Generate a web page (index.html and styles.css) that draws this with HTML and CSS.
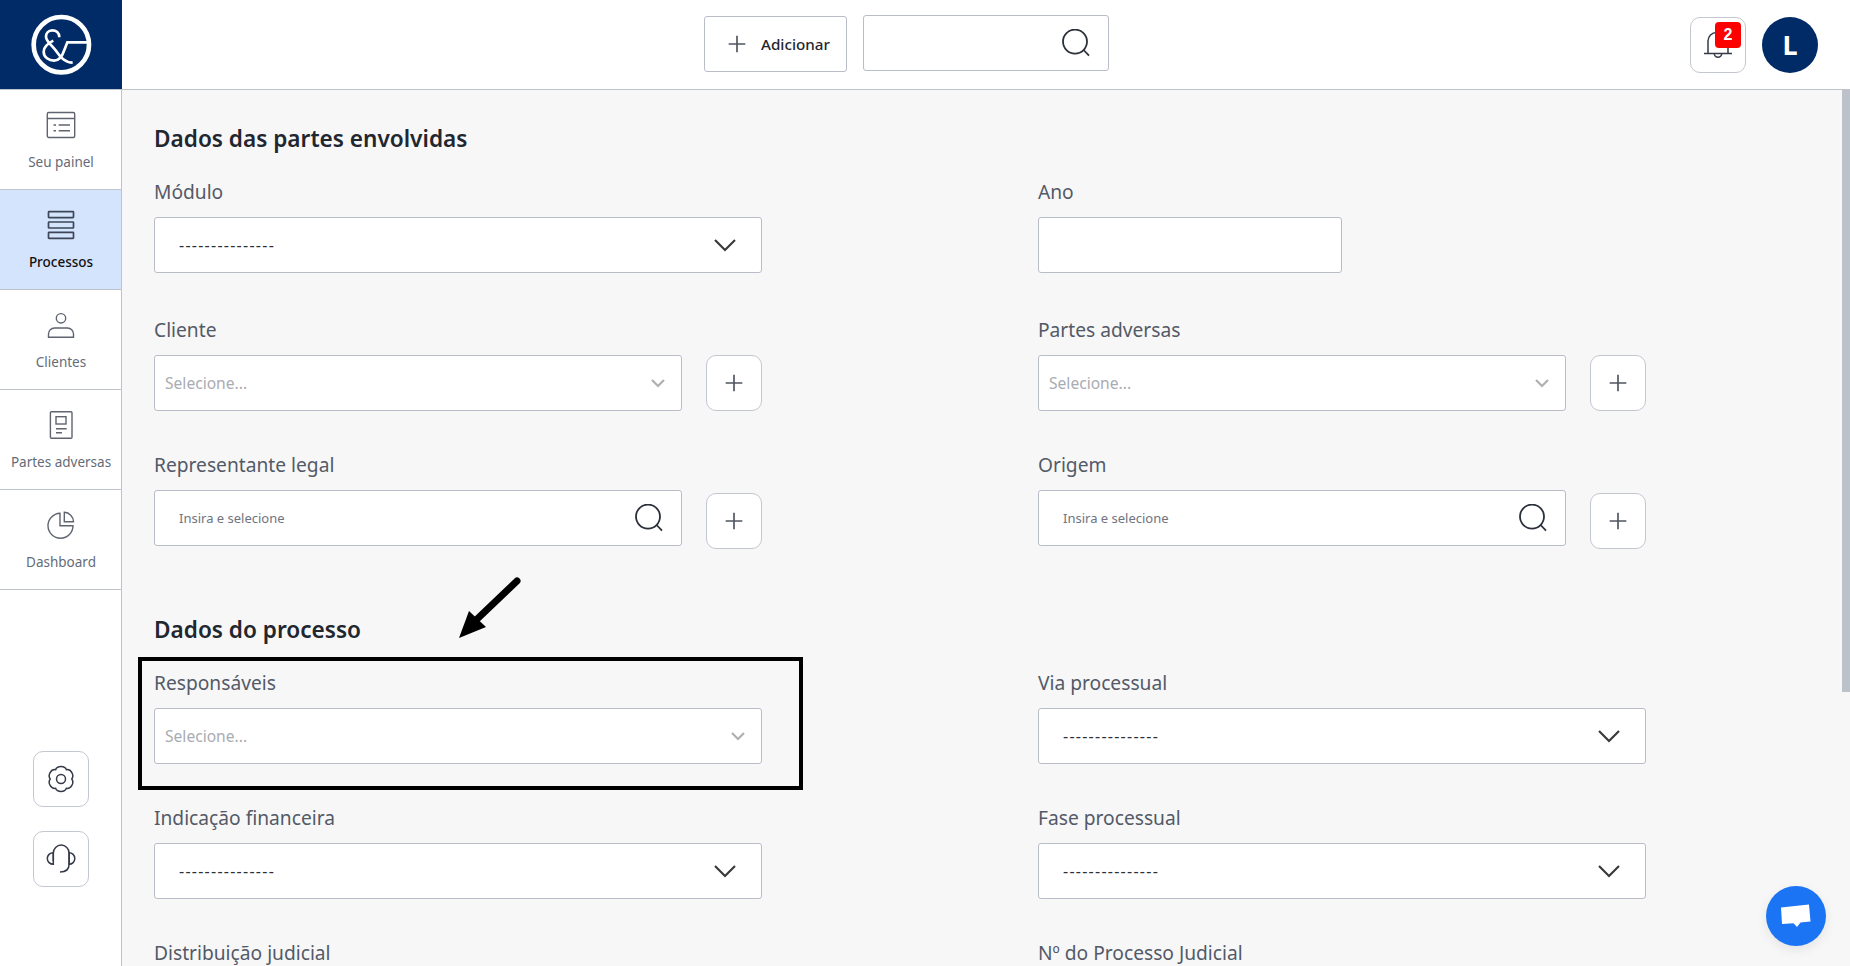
FILE: index.html
```html
<!DOCTYPE html>
<html lang="pt-BR">
<head>
<meta charset="utf-8">
<title>Processos</title>
<link rel="stylesheet" href="styles.css">
</head>
<body>
<svg class="defs" width="0" height="0" aria-hidden="true">
  <defs>
    <symbol id="i-plus" viewBox="0 0 24 24"><path d="M12 2v20M2 12h20"/></symbol>
    <symbol id="i-search" viewBox="0 0 28 28"><circle cx="13" cy="12.6" r="12"/><path d="M21.6 21l5.4 5.6"/></symbol>
    <symbol id="i-chev-big" viewBox="0 0 24 14"><path d="M2 2l10 10L22 2"/></symbol>
    <symbol id="i-chev" viewBox="0 0 14 10"><path d="M1 2l6 6 6-6"/></symbol>
  </defs>
</svg>
<div class="app">
  <aside class="side">
    <div class="logo">
      <svg width="123" height="89" viewBox="0 0 369 267" fill="none" stroke="#fff">
        <circle cx="184" cy="134" r="83" stroke-width="14"/>
        <path stroke-width="8" d="M178 112C178 98 168 91 157 91C144 91 138 101 138 110C138 124 155 135 170 155C182 172 195 188 218 188"/>
        <path stroke-width="8" d="M160 122C140 132 131 142 131 155C131 172 147 182 162 182C180 182 188 165 193 150L202 127H262"/>
      </svg>
    </div>
    <nav class="nav">
      <a class="nav-item">
        <svg class="nav-ic" viewBox="0 0 32 32"><rect x="2.3" y="3.5" width="27.4" height="25" rx="1.5"/><path d="M2.3 9.5h27.4M8.500 16H11M13.700 16H25M8.500 21.700H11M13.700 21.700H25"/></svg>
        <span>Seu painel</span>
      </a>
      <a class="nav-item active">
        <svg class="nav-ic" viewBox="0 0 32 32"><rect x="3.5" y="2.7" width="25" height="6" rx=".6"/><rect x="3.5" y="13" width="25" height="6" rx=".6"/><rect x="3.5" y="23.3" width="25" height="6" rx=".6"/></svg>
        <span>Processos</span>
      </a>
      <a class="nav-item">
        <svg class="nav-ic" viewBox="0 0 32 32"><circle cx="16" cy="9.300" r="4.700"/><path d="M3.500 28.300V25a6 6 0 0 1 6-6h13a6 6 0 0 1 6 6v3.300z"/></svg>
        <span>Clientes</span>
      </a>
      <a class="nav-item">
        <svg class="nav-ic" viewBox="0 0 32 32"><rect x="5.400" y="2.700" width="21.600" height="26.600" rx="1"/><rect x="11" y="7.700" width="10" height="7.300"/><path d="M11 19.700h10.700M11 23.700h6"/></svg>
        <span>Partes adversas</span>
      </a>
      <a class="nav-item">
        <svg class="nav-ic" viewBox="0 0 32 32"><path d="M15 4.200A12.500 12.500 0 1 0 28 16.700H15z"/><path d="M19.300 3.300v9.400h9.200a9.600 9.600 0 0 0-9.200-9.400z"/></svg>
        <span>Dashboard</span>
      </a>
    </nav>
    <div class="side-tools">
      <button class="sq-btn">
        <svg class="tool-ic" viewBox="0 0 28 28"><circle cx="14" cy="14" r="4.500"/><path d="M19.400 4.650C17.900.4 10.100.4 8.600 4.650C4 3.900.4 10 3.200 14C.4 18 4 24.100 8.600 23.350C10.100 27.600 17.900 27.600 19.400 23.350C24 24.100 27.600 18 24.800 14C27.600 10 24 3.900 19.400 4.650z"/></svg>
      </button>
      <button class="sq-btn">
        <svg class="tool-ic" viewBox="0 0 28 28"><path d="M6.300 16V8a7.900 7.900 0 0 1 15.800 0v11.300C22.100 24 19 27 13 27"/><path d="M6.300 7.700A6 5.800 0 0 0 6.300 19.300zM22.100 7.700A5.700 5.800 0 0 1 22.100 19.300z"/></svg>
      </button>
    </div>
  </aside>
  <div class="page">
    <header class="top">
      <div class="top-center">
        <button class="add-btn"><svg class="ic-plus" width="20" height="20"><use href="#i-plus"/></svg><span>Adicionar</span></button>
        <div class="top-search"><svg class="ic-search" width="28" height="28"><use href="#i-search"/></svg></div>
      </div>
      <div class="top-right">
        <button class="sq-btn bell">
          <svg class="tool-ic" viewBox="0 0 28 28"><path d="M0 22.500h28M4 22.500V10a8.500 8.500 0 0 1 8.500-8.500h3A8.500 8.500 0 0 1 24 10v12.500M10.300 22.500a3.700 3.700 0 0 0 7.400 0"/></svg>
          <span class="badge">2</span>
        </button>
        <div class="avatar">L</div>
      </div>
    </header>
    <main class="main">
      <h2 class="sec first">Dados das partes envolvidas</h2>
      <div class="grid grid-top">
        <div class="field tall">
          <label>Módulo</label>
          <div class="box pad"><span class="dash">---------------</span><svg class="ic-chev-big" width="24" height="14"><use href="#i-chev-big"/></svg></div>
        </div>
        <div class="field tall">
          <label>Ano</label>
          <div class="box short"></div>
        </div>
        <div class="field">
          <label>Cliente</label>
          <div class="row"><div class="box sel"><span class="ph">Selecione...</span><svg class="ic-chev" width="14" height="10"><use href="#i-chev"/></svg></div><button class="sq-btn"><svg class="ic-plus" width="20" height="20"><use href="#i-plus"/></svg></button></div>
        </div>
        <div class="field">
          <label>Partes adversas</label>
          <div class="row"><div class="box sel"><span class="ph">Selecione...</span><svg class="ic-chev" width="14" height="10"><use href="#i-chev"/></svg></div><button class="sq-btn"><svg class="ic-plus" width="20" height="20"><use href="#i-plus"/></svg></button></div>
        </div>
        <div class="field">
          <label>Representante legal</label>
          <div class="row"><div class="box pad srch"><span class="hint">Insira e selecione</span><svg class="ic-search" width="28" height="28"><use href="#i-search"/></svg></div><button class="sq-btn low"><svg class="ic-plus" width="20" height="20"><use href="#i-plus"/></svg></button></div>
        </div>
        <div class="field">
          <label>Origem</label>
          <div class="row"><div class="box pad srch"><span class="hint">Insira e selecione</span><svg class="ic-search" width="28" height="28"><use href="#i-search"/></svg></div><button class="sq-btn low"><svg class="ic-plus" width="20" height="20"><use href="#i-plus"/></svg></button></div>
        </div>
      </div>
      <h2 class="sec">Dados do processo</h2>
      <div class="grid">
        <div class="field">
          <label>Responsáveis</label>
          <div class="box sel"><span class="ph">Selecione...</span><svg class="ic-chev" width="14" height="10"><use href="#i-chev"/></svg></div>
        </div>
        <div class="field">
          <label>Via processual</label>
          <div class="box pad"><span class="dash">---------------</span><svg class="ic-chev-big" width="24" height="14"><use href="#i-chev-big"/></svg></div>
        </div>
        <div class="field">
          <label>Indicação financeira</label>
          <div class="box pad"><span class="dash">---------------</span><svg class="ic-chev-big" width="24" height="14"><use href="#i-chev-big"/></svg></div>
        </div>
        <div class="field">
          <label>Fase processual</label>
          <div class="box pad"><span class="dash">---------------</span><svg class="ic-chev-big" width="24" height="14"><use href="#i-chev-big"/></svg></div>
        </div>
        <div class="field">
          <label>Distribuição judicial</label>
          <div class="box pad"></div>
        </div>
        <div class="field">
          <label>Nº do Processo Judicial</label>
          <div class="box pad"></div>
        </div>
      </div>
    </main>
  </div>
</div>
<div class="scroll-thumb"></div>
<div class="mark-box"></div>
<svg class="mark-arrow" width="70" height="66" viewBox="0 0 70 66"><path d="M61 5L18 46" stroke="#000" stroke-width="7" stroke-linecap="round" fill="none"/><path d="M3 62L13 35L30 51z" fill="#000"/></svg>
<button class="chat"><svg width="32" height="26" viewBox="0 0 32 26"><path d="M1 4.500L29 1.500l1.500 17-10 1-3.500 4.500-3.500-3.800-11.500.8z" fill="#fff"/></svg></button>
</body>
</html>
```
FILE: styles.css
```css
* { box-sizing: border-box; }
html, body { margin: 0; height: 100%; overflow: hidden; }
body { font-family: "Noto Sans", "Liberation Sans", sans-serif; background: #f7f7f7; color: #535a68; }
.defs { position: absolute; }
.app { display: flex; height: 966px; }
.side { width: 122px; flex: none; background: #fff; border-right: 1px solid #bfc3cc; display: flex; flex-direction: column; position: relative; }
.logo { width: 123px; height: 89px; background: #002b66; flex: none; position: relative; }
.logo svg { display: block; }
.nav { border-top: 1px solid #bfc3cc; }
.nav-item { display: flex; flex-direction: column; align-items: center; height: 100px; padding: 19px 0 0 1px; border-bottom: 1px solid #bfc3cc; font-size: 13.5px; line-height: 20px; color: #656b78; }
.nav-item span { margin-top: 11px; white-space: nowrap; }
.nav-item.active { background: #d5e4fd; color: #111; font-weight: 500; }
.nav-ic { width: 32px; height: 32px; fill: none; stroke: #5f646f; stroke-width: 1.4; }
.active .nav-ic { stroke: #3d4556; stroke-width: 1.7; }
.side-tools { display: flex; flex-direction: column; align-items: center; gap: 24px; margin-top: 161px; padding-left: 1px; }
.sq-btn { width: 56px; height: 56px; flex: none; padding: 0; background: #fff; border: 1px solid #c3c7d0; border-radius: 10px; display: flex; align-items: center; justify-content: center; position: relative; }
.tool-ic { width: 28px; height: 28px; fill: none; stroke: #343a47; stroke-width: 1.5; overflow: visible; }
.page { flex: 1; min-width: 0; display: flex; flex-direction: column; }
.top { height: 90px; flex: none; background: #fff; border-bottom: 1px solid #bfc3cc; display: flex; position: relative; }
.top-center { display: flex; gap: 16px; margin-left: 582px; padding-top: 15px; align-items: flex-start; }
.add-btn { width: 143px; height: 56px; margin-top: 1px; background: #fff; border: 1px solid #b9bdc8; border-radius: 3px; display: flex; align-items: center; padding: 0 0 0 22px; font: 500 15.2px "Noto Sans", sans-serif; color: #22262f; gap: 14px; }
.top-search { width: 246px; height: 56px; background: #fff; border: 1px solid #b9bdc8; border-radius: 3px; display: flex; align-items: center; justify-content: flex-end; padding-right: 18px; }
.top-right { margin-left: auto; display: flex; gap: 16px; padding: 17px 32px 0 0; align-items: flex-start; }
.bell .badge { position: absolute; top: 4px; right: 4px; width: 26px; height: 26px; border-radius: 4px; background: #fe0000; color: #fff; font-size: 16px; font-weight: 700; text-align: center; line-height: 26px; }
.avatar { width: 56px; height: 56px; border-radius: 50%; background: #002b66; color: #fff; font-size: 27px; font-weight: 700; text-align: center; line-height: 56px; }
.ic-plus { fill: none; stroke: #50565f; stroke-width: 2; }
.ic-search { fill: none; stroke: #2b303b; stroke-width: 1.8; flex: none; }
.ic-chev-big { fill: none; stroke: #3a3a3a; stroke-width: 2.2; flex: none; }
.ic-chev { fill: none; stroke: #b0b0b0; stroke-width: 2.2; flex: none; }
.main { flex: 1; padding: 0 0 0 32px; overflow: hidden; }
.sec { margin: 0; font-size: 22.6px; font-weight: 600; line-height: 32px; color: #22262f; }
.sec.first { padding-top: 33px; margin-bottom: 25px; }
.sec:not(.first) { margin: 26px 0 25px; }
.grid { display: grid; grid-template-columns: 608px 608px; column-gap: 276px; grid-auto-rows: 135px; }
.grid-top { grid-template-rows: 138px; }
.field label { display: block; font-size: 19.2px; line-height: 24px; color: #535a68; margin-bottom: 13px; }
.box { height: 56px; background: #fff; border: 1px solid #b9bdc8; border-radius: 3px; display: flex; align-items: center; justify-content: space-between; flex: 1; min-width: 0; }
.box.short { width: 304px; }
.box.pad { padding: 0 24px; }
.box.srch { padding-right: 18px; }
.box.sel { padding: 0 16px 0 10px; }
.row { display: flex; gap: 24px; align-items: flex-start; }
.low { margin-top: 3px; }
.dash { font-size: 16px; letter-spacing: 1.25px; color: #2a2f3a; }
.ph { font-size: 15.6px; color: #a9acb2; }
.hint { font-size: 13px; color: #6f7480; }
.scroll-thumb { position: fixed; right: 0; top: 90px; width: 8px; height: 602px; background: #bdc1c9; }
.mark-box { position: fixed; left: 138px; top: 657px; width: 665px; height: 133px; border: 4px solid #000; }
.mark-arrow { position: fixed; left: 456px; top: 576px; }
.chat { position: fixed; left: 1766px; top: 886px; width: 60px; height: 60px; padding: 0; border: 0; border-radius: 50%; background: #1b74f3; box-shadow: 0 4px 12px rgba(0,0,0,.08); display: flex; align-items: center; justify-content: center; }
```
